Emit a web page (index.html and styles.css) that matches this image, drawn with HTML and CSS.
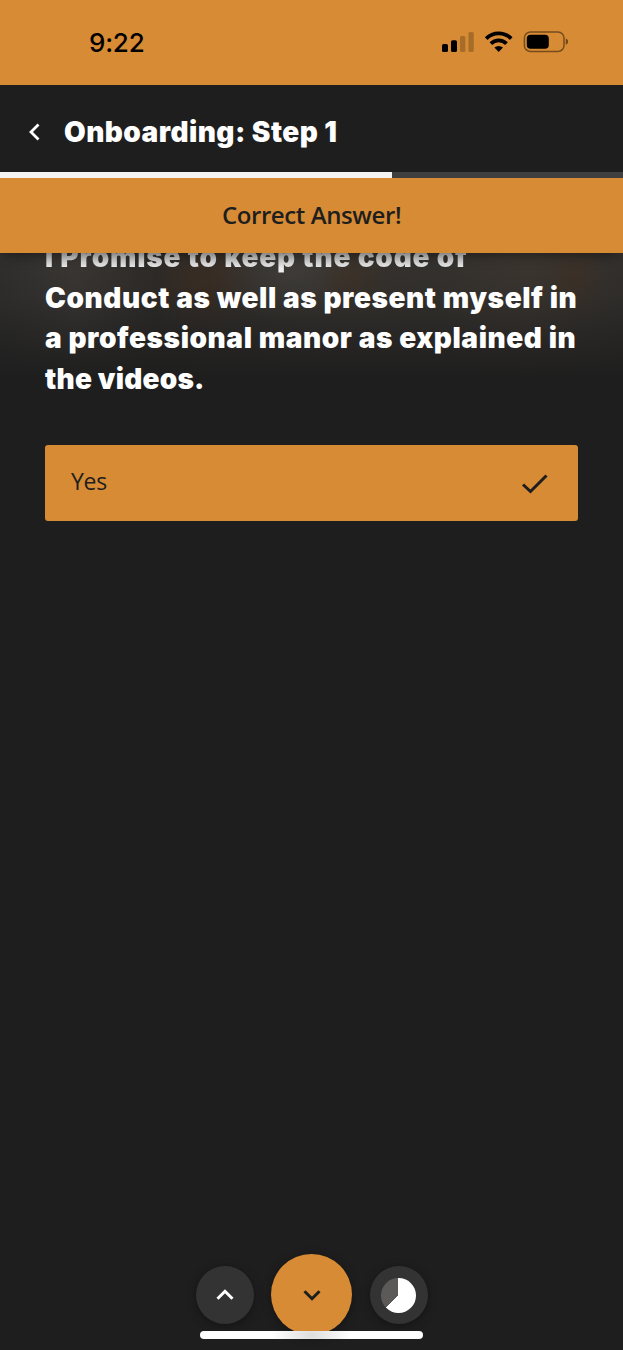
FILE: index.html
```
<!DOCTYPE html>
<html lang="en">
<head>
    <meta charset="UTF-8">
    <meta name="viewport" content="width=device-width, initial-scale=1.0">
    <title>Onboarding: Step 1</title>
    <link rel="stylesheet" href="styles.css">
</head>
<body>

    <!-- Status bar -->
    <div class="status-bar">
        <span class="time">9:22</span>
        <svg class="status-icons" width="128" height="24" viewBox="0 0 128 24">
            <rect x="0" y="13" width="6" height="8" rx="1.6"/>
            <rect x="9" y="9.3" width="6" height="11.7" rx="1.6"/>
            <rect x="18" y="5" width="5.4" height="16" rx="1.6" opacity="0.22"/>
            <rect x="26.4" y="1" width="5.4" height="20" rx="1.6" opacity="0.22"/>
            <g fill="none" stroke="#000" stroke-width="3.8">
                <path d="M44.2 7.6a17.6 17.6 0 0 1 25 0"/>
                <path d="M48.9 12.6a11 11 0 0 1 15.6 0"/>
            </g>
            <path d="M52.4 16.6a6.5 6.5 0 0 1 8.6 0L56.7 20.9z"/>
            <rect x="82.4" y="1" width="39.6" height="19.4" rx="6" fill="none" stroke="#000" stroke-width="1.5" opacity="0.45"/>
            <rect x="84.8" y="3.8" width="22" height="14" rx="3.8"/>
            <path d="M123.8 7.6c3 .8 3 5.4 0 6.2z" opacity="0.5"/>
        </svg>
    </div>

    <!-- Header -->
    <div class="header">
        <svg class="back" width="12" height="18" viewBox="0 0 12 18">
            <path d="M10.500 1.500L3 9l7.500 7.500"/>
        </svg>
        <h1>Onboarding: Step 1</h1>
    </div>

    <div class="progress">
        <div class="progress-value" style="width: 63%"></div>
    </div>

    <div class="message">Correct Answer!</div>

    <!-- Question -->
    <div class="question">
        <div class="backdrop"></div>
        <h2>
            <span class="line line-1">I Promise to keep the code of</span>
            <span class="line line-2">Conduct as well as present myself in</span>
            <span class="line line-3">a professional manor as explained in</span>
            <span class="line line-4">the videos.</span>
        </h2>
        <div class="answer">
            <span>Yes</span>
            <svg width="28" height="22" viewBox="0 0 28 22">
                <path d="M3 12.500l7.500 7L26.500 3.500"/>
            </svg>
        </div>
    </div>

    <!-- Bottom controls -->
    <div class="controls">
        <div class="button">
            <svg width="18" height="12" viewBox="0 0 18 12"><path d="M1.500 9.800L9 2.300l7.500 7.500"/></svg>
        </div>
        <div class="button next">
            <svg width="18" height="12" viewBox="0 0 18 12"><path d="M1.500 2.200L9 9.700l7.500-7.500"/></svg>
        </div>
        <div class="button">
            <div class="pie"></div>
        </div>
        <div class="home-indicator"></div>
    </div>

</body>
</html>
```
FILE: styles.css
```
* {
    box-sizing: border-box;
}

body {
    margin: 0;
    height: 1350px;
    display: flex;
    flex-direction: column;
    background-color: #1e1e1e;
    font-family: 'Open Sans', sans-serif;
    color: white;
    overflow: hidden;
}

/* Status bar */
.status-bar {
    height: 85px;
    flex-shrink: 0;
    padding: 0 53px 0 89px;
    display: flex;
    justify-content: space-between;
    align-items: center;
    background-color: #d78b34;
    color: #000;
}

.time {
    font-family: 'Inter', sans-serif;
    font-size: 26px;
    font-weight: 500;
    letter-spacing: -0.2px;
}

/* Header */
.header {
    height: 87px;
    flex-shrink: 0;
    padding: 6px 0 0 28px;
    display: flex;
    align-items: center;
    gap: 24px;
}

.back path {
    fill: none;
    stroke: white;
    stroke-width: 2.8;
}

h1,
h2 {
    margin: 0;
    font-family: 'Inter', sans-serif;
    font-weight: 900;
    font-size: 28px;
    white-space: nowrap;
}

h1 {
    letter-spacing: 0.45px;
}

.progress {
    position: relative;
    z-index: 3;
    height: 6px;
    flex-shrink: 0;
    background-color: #3f3f3f;
}

.progress-value {
    height: 100%;
    background-color: #f4f4f4;
}

/* Answer message */
.message {
    position: relative;
    z-index: 2;
    height: 75px;
    flex-shrink: 0;
    padding-bottom: 2px;
    display: flex;
    justify-content: center;
    align-items: center;
    background-color: #d78b34;
    color: #1e1e1e;
    font-size: 24px;
    font-weight: 600;
    letter-spacing: -0.4px;
    box-shadow: 0 6px 12px -4px rgba(0, 0, 0, 0.45);
}

/* Question */
.question {
    position: relative;
    flex: 1;
    padding: 0 45px;
}

.backdrop {
    position: absolute;
    top: 0;
    left: 0;
    right: 0;
    height: 125px;
    background:
        linear-gradient(rgba(30, 30, 30, 0), rgba(30, 30, 30, 0.2) 35%, #1e1e1e),
        radial-gradient(ellipse 55px 50px at 205px 30px, rgba(76, 46, 24, 0.4), transparent),
        radial-gradient(ellipse 40px 40px at 350px 25px, rgba(76, 46, 24, 0.3), transparent),
        radial-gradient(ellipse 35px 40px at 575px 25px, rgba(76, 46, 24, 0.3), transparent),
        radial-gradient(ellipse 80px 50px at 290px 20px, rgba(72, 70, 67, 0.6), transparent),
        linear-gradient(90deg, #302f2e, #3b3734 12%, #2e2b28 25%, #37332f 50%, #35322e 70%, #3c3630 85%, #33302d);
}

h2 {
    position: relative;
    margin-top: -16px;
}

.line {
    display: block;
    height: 40.5px;
    line-height: 40.5px;
}

.line-1 {
    letter-spacing: 0.82px;
    background: linear-gradient(#bbb 16px, #eee 32px);
    background-clip: text;
    color: transparent;
}

.line-2,
.line-3 {
    letter-spacing: 0.58px;
}

.line-4 {
    letter-spacing: 0.2px;
}

.answer {
    height: 76.5px;
    margin-top: 45.5px;
    padding: 0 30px 0 26px;
    display: flex;
    justify-content: space-between;
    align-items: center;
    background-color: #d78b34;
    border-radius: 3px;
    color: #1e1e1e;
    font-size: 23px;
    letter-spacing: -0.3px;
}

.answer span {
    padding-bottom: 3px;
}

.answer path {
    fill: none;
    stroke: #1e1e1e;
    stroke-width: 3;
}

/* Bottom controls */
.controls {
    position: relative;
    height: 96px;
    flex-shrink: 0;
    display: flex;
    justify-content: center;
    align-items: flex-start;
    gap: 17.5px;
}

.button {
    width: 58px;
    height: 58px;
    margin-top: 12px;
    display: flex;
    justify-content: center;
    align-items: center;
    background-color: #333;
    border-radius: 50%;
    box-shadow: 0 2px 10px rgba(0, 0, 0, 0.35);
}

.button path {
    fill: none;
    stroke: white;
    stroke-width: 3;
}

.next {
    width: 81px;
    height: 81px;
    margin-top: 0;
    background-color: #d78b34;
}

.next path {
    stroke: #1e1e1e;
}

.pie {
    width: 35px;
    height: 35px;
    border-radius: 50%;
    background: conic-gradient(white 63%, #5c5a58 63%);
}

.home-indicator {
    position: absolute;
    left: 200px;
    top: 77px;
    width: 223px;
    height: 8px;
    border-radius: 4px;
    background: radial-gradient(ellipse 40px 20px at center, #ddd, white);
}
```
